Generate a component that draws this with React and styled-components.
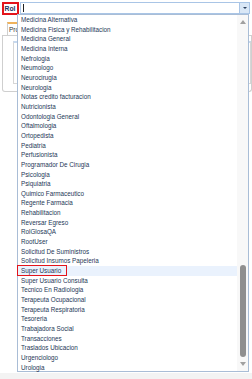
import React from "react";
import styled, { createGlobalStyle } from "styled-components";

const roles = [
  "Medicina Alternativa",
  "Medicina Fisica y Rehabilitacion",
  "Medicina General",
  "Medicina Interna",
  "Nefrologia",
  "Neumologo",
  "Neurocirugia",
  "Neurologia",
  "Notas credito facturacion",
  "Nutricionista",
  "Odontologia General",
  "Oftalmologia",
  "Ortopedista",
  "Pediatria",
  "Perfusionista",
  "Programador De Cirugia",
  "Psicologia",
  "Psiquiatria",
  "Quimico Farmaceutico",
  "Regente Farmacia",
  "Rehabilitacion",
  "Reversar Egreso",
  "RolGlosaQA",
  "RootUser",
  "Solicitud De Suministros",
  "Solicitud Insumos Papeleria",
  "Super Usuario",
  "Super Usuario Consulta",
  "Tecnico En Radiologia",
  "Terapeuta Ocupacional",
  "Terapeuta Respiratoria",
  "Tesoreria",
  "Trabajadora Social",
  "Transacciones",
  "Traslados Ubicacion",
  "Urgenciologo",
  "Urologia"
];

const GlobalStyle = createGlobalStyle`
  html, body {
    margin: 0;
    padding: 0;
    background: #f3f3f3;
    font-family: "Liberation Sans", Arial, sans-serif;
  }
`;

const Page = styled.div`
  position: relative;
  width: 252px;
  height: 373px;
  background: #ffffff;
  overflow: hidden;
`;

const TopBar = styled.div`
  display: flex;
  align-items: flex-start;
  gap: 1px;
  padding: 2px 2px 0 2px;
`;

const Label = styled.div`
  box-sizing: border-box;
  width: 17px;
  height: 13px;
  border: 2px solid #e3141b;
  font-size: 6.8px;
  font-weight: bold;
  color: #1d3560;
  line-height: 9px;
  padding-left: 0.5px;
  white-space: nowrap;
  overflow: hidden;
`;

const Combo = styled.div`
  flex: 1;
  display: flex;
  box-sizing: border-box;
  height: 12px;
  border: 1px solid #a9c5e6;
  background: #fff;
`;

const Caret = styled.div`
  width: 1px;
  height: 8px;
  margin: 1px 0 0 2px;
  background: #222;
`;

const Spacer = styled.div`
  flex: 1;
`;

const Trigger = styled.div`
  width: 9px;
  display: flex;
  align-items: center;
  justify-content: center;
  background: #d9e7f6;
  border-left: 1px solid #a9c5e6;
`;

const Tri = styled.div`
  width: 0;
  height: 0;
  border-left: ${(p) => p.$w}px solid transparent;
  border-right: ${(p) => p.$w}px solid transparent;
  ${(p) => (p.$up ? "border-bottom" : "border-top")}: ${(p) => p.$h}px solid ${(p) => p.$c};
`;

const Panel = styled.div`
  margin: 7px 0 0 2px;
`;

const TabStrip = styled.div`
  display: flex;
  height: 13px;
  padding-left: 5px;
  border-bottom: 1px solid #cfcfcf;
`;

const Tab = styled.div`
  width: 40px;
  border: 1px solid #cfcfcf;
  border-top: 2px solid #f0b35c;
  border-bottom: none;
  background: #fff;
  font-size: 6.5px;
  color: #333;
  padding: 2px 0 0 1px;
  box-sizing: border-box;
`;

const PanelBody = styled.div`
  height: 56px;
  border: 1px solid #cfcfcf;
  border-top: none;
  border-radius: 0 0 3px 3px;
  padding: 5px 0 0 10px;
  box-sizing: border-box;
`;

const Inner = styled.div`
  height: 40px;
  border: 1px solid #d6d6d6;
  border-top: 2px solid #c7d9ef;
`;

const DropList = styled.div`
  position: absolute;
  left: 17px;
  top: 14px;
  width: 232px;
  height: 358px;
  box-sizing: border-box;
  border: 1px solid #a9bdd6;
  background: #fff;
  display: flex;
`;

const Items = styled.div`
  flex: 1;
  display: flex;
  flex-direction: column;
`;

const Item = styled.div`
  position: relative;
  height: 9.67px;
  line-height: 9.67px;
  padding-left: 3px;
  font-size: 6.3px;
  color: #243857;
  white-space: nowrap;
  background: ${(p) => (p.$active ? "#eaf2fd" : "transparent")};
`;

const Mark = styled.div`
  position: absolute;
  left: -1px;
  top: -1px;
  width: 50px;
  height: 11px;
  box-sizing: border-box;
  border: 1.5px solid #e3141b;
`;

const ScrollTrack = styled.div`
  width: 11px;
  background: #f8f8f8;
  display: flex;
  flex-direction: column;
  align-items: center;
  padding: 5px 0 5px;
  box-sizing: border-box;
`;

const Thumb = styled.div`
  width: 6px;
  height: 92px;
  border-radius: 3px;
  background: #8f8f8f;
  margin-bottom: 5px;
`;

export default function App() {
  return (
    <>
      <GlobalStyle />
      <Page>
        <TopBar>
          <Label>Rol</Label>
          <Combo>
            <Caret />
            <Spacer />
            <Trigger>
              <Tri $w={2} $h={2} $c="#2b3f5c" />
            </Trigger>
          </Combo>
        </TopBar>
        <Panel>
          <TabStrip>
            <Tab>Pro</Tab>
          </TabStrip>
          <PanelBody>
            <Inner />
          </PanelBody>
        </Panel>
        <DropList>
          <Items>
            {roles.map((r) => (
              <Item key={r} $active={r === "Super Usuario"}>
                {r}
                {r === "Super Usuario" && <Mark />}
              </Item>
            ))}
          </Items>
          <ScrollTrack>
            <Tri $up $w={3} $h={4} $c="#a0a0a0" />
            <Spacer />
            <Thumb />
            <Tri $w={3} $h={4} $c="#a0a0a0" />
          </ScrollTrack>
        </DropList>
      </Page>
    </>
  );
}
